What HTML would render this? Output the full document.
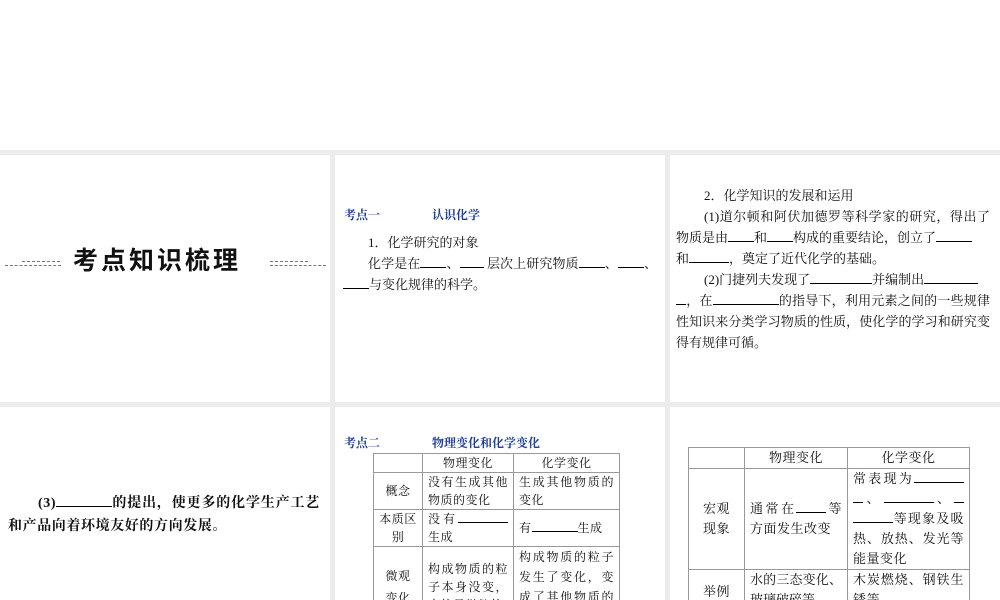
<!DOCTYPE html>
<html><head><meta charset="utf-8"><style>
*{margin:0;padding:0;box-sizing:border-box}
html,body{width:1000px;height:600px;overflow:hidden}
body{background:#ececec;position:relative;font-family:"Liberation Serif","Noto Serif CJK SC",serif;color:#111}
.p{position:absolute;background:#fff;overflow:hidden}
.t{position:absolute;font-size:13px;line-height:21px;text-align:justify}
.b{color:#1f3f9a;font-size:12px;font-weight:bold;position:absolute}
u{text-decoration:none;border-bottom:1px solid #000;display:inline-block;height:13px}
table{position:absolute;border-collapse:collapse;font-size:12px;line-height:18px;background:#fff;table-layout:fixed}
td{border:1px solid #999;padding:0 5px;vertical-align:middle;text-align:justify;letter-spacing:0.5px}
.dash{position:absolute;height:0;border-top:1px dashed #777}
</style></head><body>
<div class="p" style="left:0;top:0;width:1000px;height:150px"></div>
<div class="p" style="left:0;top:155px;width:330px;height:247px">
<div class="dash" style="left:5px;top:110px;width:56px"></div>
<div class="dash" style="left:22px;top:106px;width:38px"></div>
<div class="dash" style="left:270px;top:110px;width:56px"></div>
<div class="dash" style="left:270px;top:106px;width:38px"></div>
<div style="position:absolute;left:73px;top:89px;font-size:25px;font-weight:bold;letter-spacing:3px;font-family:'Noto Sans CJK SC',sans-serif;line-height:30px">考点知识梳理</div>
</div>
<div class="p" style="left:335px;top:155px;width:330px;height:247px">
<div class="b" style="left:9px;top:51px">考点一<span style="margin-left:52px">认识化学</span></div>
<div class="t" style="left:33px;top:77px">1．化学研究的对象</div>
<div class="t" style="left:8px;top:98px;width:314px;text-indent:25px">化学是在<u style="width:26px"></u>、<u style="width:24px"></u> 层次上研究物质<u style="width:26px"></u>、<u style="width:26px"></u>、<u style="width:26px"></u>与变化规律的科学。</div>
</div>
<div class="p" style="left:670px;top:155px;width:330px;height:247px">
<div class="t" style="left:6px;top:30px;width:314px;text-indent:28px">2．化学知识的发展和运用</div>
<div class="t" style="left:6px;top:51px;width:314px;text-indent:28px">(1)道尔顿和阿伏加德罗等科学家的研究，得出了物质是由<u style="width:26px"></u>和<u style="width:26px"></u>构成的重要结论，创立了<u style="width:36px"></u><br>和<u style="width:40px"></u>，奠定了近代化学的基础。</div>
<div class="t" style="left:6px;top:114px;width:314px;text-indent:28px">(2)门捷列夫发现了<u style="width:62px"></u>并编制出<u style="width:54px"></u><br><u style="width:10px"></u>，在<u style="width:66px"></u>的指导下，利用元素之间的一些规律性知识来分类学习物质的性质，使化学的学习和研究变得有规律可循。</div>
</div>
<div class="p" style="left:0;top:407px;width:330px;height:193px">
<div class="t" style="left:8px;top:85px;width:312px;font-size:14px;line-height:23px;text-indent:30px;font-weight:bold;letter-spacing:0.6px">(3)<u style="width:56px;font-weight:normal"></u>的提出，使更多的化学生产工艺和产品向着环境友好的方向发展。</div>
</div>
<div class="p" style="left:335px;top:407px;width:330px;height:193px">
<div class="b" style="left:9px;top:27px">考点二<span style="margin-left:52px">物理变化和化学变化</span></div>
<table style="left:38px;top:46px;width:247px">
<col style="width:49px"><col style="width:91px"><col>
<tr style="height:18px"><td></td><td style="text-align:center">物理变化</td><td style="text-align:center">化学变化</td></tr>
<tr style="height:37px"><td style="text-align:center">概念</td><td>没有生成其他物质的变化</td><td>生成其他物质的变化</td></tr>
<tr style="height:37px"><td style="text-align:center">本质区别</td><td>没有<u style="width:50px"></u>生成</td><td>有<u style="width:46px"></u>生成</td></tr>
<tr style="height:60px"><td style="text-align:center;line-height:22px">微观<br>变化</td><td>构成物质的粒子本身没变，变的是微粒的</td><td style="line-height:20px">构成物质的粒子发生了变化，变成了其他物质的粒子</td></tr>
</table>
</div>
<div class="p" style="left:670px;top:407px;width:330px;height:193px">
<table style="left:18px;top:40px;width:282px;font-size:13px;line-height:20px">
<col style="width:56px"><col style="width:103px"><col>
<tr style="height:21px"><td></td><td style="text-align:center">物理变化</td><td style="text-align:center">化学变化</td></tr>
<tr style="height:100px"><td style="text-align:center">宏观<br>现象</td><td>通常在<u style="width:30px"></u>等方面发生改变</td><td>常表现为<u style="width:50px"></u><u style="width:10px"></u>、<u style="width:50px"></u>、<u style="width:10px"></u><u style="width:40px"></u>等现象及吸热、放热、发光等能量变化</td></tr>
<tr style="height:44px"><td style="text-align:center">举例</td><td style="vertical-align:top;letter-spacing:0">水的三态变化、玻璃破碎等</td><td style="vertical-align:top">木炭燃烧、钢铁生锈等</td></tr>
</table>
</div>
</body></html>
